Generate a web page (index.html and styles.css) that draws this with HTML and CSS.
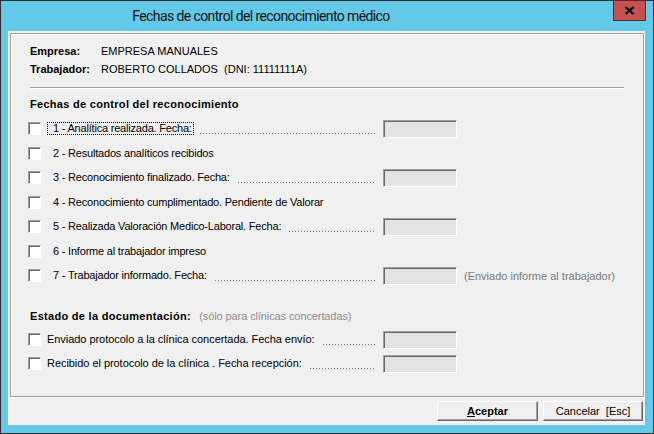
FILE: index.html
```html
<!DOCTYPE html>
<html lang="es">
<head>
<meta charset="utf-8">
<title>Fechas de control del reconocimiento médico</title>
<link rel="stylesheet" href="styles.css">
</head>
<body>
<div class="window">
  <div class="titlebar">
    <div class="title">Fechas de control del reconocimiento médico</div>
    <div class="close"><svg width="11" height="9" viewBox="0 0 11 9"><path d="M1.5 1 L9.5 8 M9.5 1 L1.5 8" stroke="#000" stroke-width="2.2" fill="none"/></svg></div>
  </div>
  <div class="client">
    <div class="panel">
      <div class="info-row"><span class="info-label">Empresa:</span><span>EMPRESA MANUALES</span></div>
      <div class="info-row"><span class="info-label">Trabajador:</span><span class="pre">ROBERTO COLLADOS  (DNI: 11111111A)</span></div>
      <div class="sep"></div>
      <div class="heading">Fechas de control del reconocimiento</div>
      <div class="rows">
        <div class="row focus"><div class="lead"><span class="cb"></span><span class="label">1 - Analítica realizada. Fecha:</span><span class="dots"></span></div><span class="field"></span></div>
        <div class="row"><div class="lead"><span class="cb"></span><span class="label">2 - Resultados analíticos recibidos</span></div></div>
        <div class="row"><div class="lead"><span class="cb"></span><span class="label">3 - Reconocimiento finalizado. Fecha:</span><span class="dots"></span></div><span class="field"></span></div>
        <div class="row"><div class="lead"><span class="cb"></span><span class="label">4 - Reconocimiento cumplimentado. Pendiente de Valorar</span></div></div>
        <div class="row"><div class="lead"><span class="cb"></span><span class="label">5 - Realizada Valoración Medico-Laboral. Fecha:</span><span class="dots"></span></div><span class="field"></span></div>
        <div class="row"><div class="lead"><span class="cb"></span><span class="label">6 - Informe al trabajador impreso</span></div></div>
        <div class="row"><div class="lead"><span class="cb"></span><span class="label">7 - Trabajador informado. Fecha:</span><span class="dots"></span></div><span class="field"></span><span class="note">(Enviado informe al trabajador)</span></div>
      </div>
      <div class="heading heading2">Estado de la documentación: <span class="sub">(sólo para clínicas concertadas)</span></div>
      <div class="rows rows2">
        <div class="row"><div class="lead"><span class="cb"></span><span class="label plain">Enviado protocolo a la clínica concertada. Fecha envío:</span><span class="dots"></span></div><span class="field"></span></div>
        <div class="row"><div class="lead"><span class="cb"></span><span class="label plain">Recibido el protocolo de la clínica . Fecha recepción:</span><span class="dots"></span></div><span class="field"></span></div>
      </div>
    </div>
    <div class="buttons">
      <button class="btn btn-default"><u>A</u>ceptar</button>
      <button class="btn">Cancelar  [Esc]</button>
    </div>
  </div>
</div>
</body>
</html>
```
FILE: styles.css
```css
html, body {
  margin: 0;
  padding: 0;
}
body {
  width: 654px;
  height: 434px;
  overflow: hidden;
  font-family: "Liberation Sans", Arial, sans-serif;
  font-size: 11px;
  color: #000;
}
.window {
  width: 654px;
  height: 434px;
  box-sizing: border-box;
  border: 1px solid #2e2e2e;
  background: #62c9e9;
  display: flex;
  flex-direction: column;
}
.titlebar {
  height: 30px;
  display: flex;
  flex: 0 0 30px;
}
.title {
  flex: 1;
  text-align: center;
  padding-right: 92px;
  line-height: 31px;
  font-family: Roboto, "Liberation Sans", sans-serif;
  font-size: 14px;
  letter-spacing: -0.6px;
  color: #111;
}
.close {
  width: 33px;
  height: 21px;
  margin-top: -1px;
  margin-right: 7px;
  box-sizing: border-box;
  background: #c75050;
  border: 1px solid #5c2a2a;
  display: flex;
  align-items: center;
  justify-content: center;
}
.client {
  flex: 1;
  margin: 0 8px 8px 7px;
  background: #f0f0f0;
  padding: 2px 1px 0 2px;
  display: flex;
  flex-direction: column;
}
.panel {
  border: 1px solid #a0a0a0;
  box-shadow: inset 1px 1px 0 #fff, 1px 1px 0 #fff;
  padding: 8px 19px 20px 19px;
}
.info-row {
  display: flex;
  line-height: 18px;
  height: 18px;
}
.info-label {
  width: 71px;
  font-weight: bold;
}
.pre {
  white-space: pre;
}
.sep {
  height: 1px;
  background: #a0a0a0;
  border-bottom: 1px solid #fff;
  margin-top: 9px;
}
.heading {
  margin-top: 7px;
  line-height: 16px;
  height: 16px;
  font-weight: bold;
  letter-spacing: 0.3px;
  white-space: nowrap;
}
.heading2 {
  margin-top: 19.5px;
}
.sub {
  font-weight: normal;
  letter-spacing: -0.1px;
  color: #8e8e8e;
  margin-left: 5px;
}
.rows {
  margin-top: 4.5px;
  margin-left: -2px;
}
.rows .row {
  height: 24.5px;
}
.rows2 {
  margin-top: 4px;
}
.rows2 .row {
  height: 24px;
}
.row {
  display: flex;
  align-items: center;
}
.lead {
  width: 347px;
  flex: 0 0 347px;
  display: flex;
  align-items: center;
}
.cb {
  width: 13px;
  height: 13px;
  flex: 0 0 13px;
  box-sizing: border-box;
  background: #fff;
  border: 1px solid;
  border-color: #a0a0a0 #fff #fff #a0a0a0;
  box-shadow: inset 1px 1px 0 #696969;
}
.label {
  margin-left: 6px;
  padding-left: 6px;
  padding-right: 2px;
  line-height: 13px;
  letter-spacing: -0.2px;
  white-space: nowrap;
}
.label.plain {
  padding-left: 0;
  letter-spacing: -0.05px;
}
.row.focus .label {
  outline: 1px dotted #000;
  outline-offset: -1px;
}
.dots {
  flex: 1;
  height: 1px;
  margin: 10px 0 0 6px;
  background: repeating-linear-gradient(90deg, #7a7a7a 0 1px, transparent 1px 3px);
}
.field {
  width: 74px;
  height: 18px;
  flex: 0 0 74px;
  box-sizing: border-box;
  margin-left: 8px;
  background: #e3e3e3;
  border: 1px solid;
  border-color: #a0a0a0 #fff #fff #a0a0a0;
  box-shadow: inset 1px 1px 0 #696969;
}
.note {
  margin-left: 7px;
  color: #7a7a7a;
  white-space: nowrap;
}
.buttons {
  display: flex;
  justify-content: flex-end;
  gap: 5px;
  margin-top: 4px;
  padding-right: 1px;
}
.btn {
  height: 20px;
  box-sizing: border-box;
  margin: 0;
  padding: 0;
  font-family: "Liberation Sans", Arial, sans-serif;
  font-size: 11px;
  color: #000;
  background: #f0f0f0;
  border: 1px solid;
  border-color: #fff #696969 #696969 #fff;
  box-shadow: inset -1px -1px 0 #a0a0a0;
  white-space: pre;
  width: 100px;
}
.btn-default {
  width: 101px;
  font-weight: bold;
}
```
